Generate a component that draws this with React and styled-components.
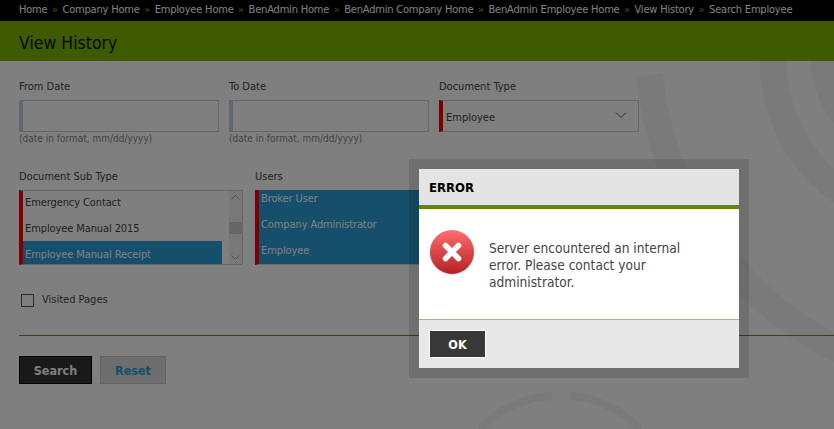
import React from 'react'
import styled, { createGlobalStyle } from 'styled-components'

const crumbs = [
  'Home',
  'Company Home',
  'Employee Home',
  'BenAdmin Home',
  'BenAdmin Company Home',
  'BenAdmin Employee Home',
  'View History',
  'Search Employee',
]

const App = () => {
  return (
    <Page>
      <GlobalStyle />
      <Watermark viewBox="0 0 834 429" aria-hidden="true">
        <path d="M 649.6 75 A 344 344 0 0 0 900 373.5" />
        <circle cx="935" cy="60" r="162" />
        <circle className="solid" cx="911" cy="60" r="100" />
        <path className="thin" d="M 480 429 A 105 105 0 0 1 552 396" />
        <path className="thin" d="M 571 396 A 105 105 0 0 1 640 429" />
      </Watermark>

      <Breadcrumbs>
        {crumbs.map((crumb, i) => (
          <React.Fragment key={crumb}>
            {i > 0 && <Sep>»</Sep>}
            <Crumb>{crumb}</Crumb>
          </React.Fragment>
        ))}
      </Breadcrumbs>
      <TitleBar>View History</TitleBar>

      <Form>
        <Row>
          <Field>
            <Label>From Date</Label>
            <TextBox />
            <Hint>(date in format, mm/dd/yyyy)</Hint>
          </Field>
          <Field>
            <Label>To Date</Label>
            <TextBox />
            <Hint>(date in format, mm/dd/yyyy)</Hint>
          </Field>
          <Field>
            <Label>Document Type</Label>
            <SelectBox>
              Employee
              <svg width="12" height="7" viewBox="0 0 12 7" fill="none" stroke="#555" strokeWidth="1">
                <path d="M1 .5 L6 5.5 L11 .5" />
              </svg>
            </SelectBox>
          </Field>
        </Row>

        <ListRow>
          <ListField>
            <Label>Document Sub Type</Label>
            <ListBox>
              <Options>
                <Option>Emergency Contact</Option>
                <Option>Employee Manual 2015</Option>
                <Option $selected>Employee Manual Receipt</Option>
              </Options>
              <Scrollbar>
                <Arrow viewBox="0 0 9 5"><path d="M.5 4.5 L4.5 .5 L8.5 4.5" /></Arrow>
                <Thumb />
                <Arrow viewBox="0 0 9 5"><path d="M.5 .5 L4.5 4.5 L8.5 .5" /></Arrow>
              </Scrollbar>
            </ListBox>
          </ListField>
          <ListField>
            <Label>Users</Label>
            <UserList>
              <UserOption>Broker User</UserOption>
              <UserOption>Company Administrator</UserOption>
              <UserOption>Employee</UserOption>
            </UserList>
          </ListField>
        </ListRow>

        <CheckRow>
          <CheckBox />
          <CheckLabel>Visited Pages</CheckLabel>
        </CheckRow>
        <Rule />
        <Buttons>
          <SearchButton>Search</SearchButton>
          <ResetButton>Reset</ResetButton>
        </Buttons>
      </Form>

      <Overlay />
      <DialogFrame>
        <DialogTitle>ERROR</DialogTitle>
        <DialogBody>
          <svg width="46" height="46" viewBox="0 0 46 46">
            <defs>
              <linearGradient id="errorFill" x1="0" y1="0" x2="0" y2="1">
                <stop offset="0" stopColor="#ff6e70" />
                <stop offset="1" stopColor="#b52024" />
              </linearGradient>
            </defs>
            <circle cx="23" cy="23.5" r="22.5" fill="#e8e8e8" />
            <circle cx="23" cy="23" r="22" fill="url(#errorFill)" />
            <path d="M16.5 16.5 L29.5 29.5 M29.5 16.5 L16.5 29.5" stroke="#fff" strokeWidth="5.5" strokeLinecap="round" />
          </svg>
          <Message>Server encountered an internal error. Please contact your administrator.</Message>
        </DialogBody>
        <DialogFooter>
          <OkButton>OK</OkButton>
        </DialogFooter>
      </DialogFrame>
    </Page>
  )
}

const GlobalStyle = createGlobalStyle`
  html, body {
    margin: 0;
    padding: 0;
    background: #fff;
  }
  body {
    font-family: "DejaVu Sans Condensed", "Liberation Sans", sans-serif;
    font-size: 11px;
    color: #444;
  }
`

const Page = styled.div`
  position: relative;
  width: 834px;
  height: 429px;
  overflow: hidden;
  background: #fff;
`

const Watermark = styled.svg`
  position: absolute;
  inset: 0;
  width: 834px;
  height: 429px;
  fill: none;
  stroke: #f4f4f4;
  stroke-width: 27px;
  .solid {
    fill: #f4f4f4;
    stroke: none;
  }
  .thin {
    stroke-width: 8px;
  }
`

const Breadcrumbs = styled.div`
  position: relative;
  display: flex;
  align-items: center;
  height: 21px;
  padding: 0 0 3px 19px;
  box-sizing: border-box;
  background: #000;
`

const Crumb = styled.span`
  color: #fff;
  white-space: nowrap;
  letter-spacing: -0.19px;
`

const Sep = styled.span`
  width: 15px;
  text-align: center;
  color: #7eb400;
`

const TitleBar = styled.div`
  position: relative;
  display: flex;
  align-items: center;
  height: 40px;
  padding: 4px 0 0 19px;
  box-sizing: border-box;
  background: #7eb400;
  color: #111;
  font-size: 17.5px;
`

const Form = styled.div`
  position: relative;
  padding: 19px 0 0 19px;
`

const Row = styled.div`
  display: flex;
  gap: 10px;
`

const Field = styled.div`
  width: 200px;
`

const Label = styled.div`
  height: 20px;
  line-height: 14px;
  color: #444;
`

const TextBox = styled.div`
  box-sizing: border-box;
  height: 32px;
  border: 1px solid #bed0d8;
  border-left: 4px solid #bed0d8;
  background: transparent;
`

const Hint = styled.div`
  line-height: 14px;
  font-size: 10px;
  color: #888;
`

const SelectBox = styled.div`
  box-sizing: border-box;
  display: flex;
  align-items: center;
  justify-content: space-between;
  height: 32px;
  padding: 2px 11px 0 3px;
  border: 1px solid #bed0d8;
  border-left: 4px solid #ff0000;
  svg {
    margin-top: -3px;
  }
`

const ListRow = styled.div`
  display: flex;
  gap: 12px;
  padding-top: 24px;
`

const ListField = styled.div`
  width: 224px;
`

const ListBox = styled.div`
  box-sizing: border-box;
  display: flex;
  height: 75px;
  border: 1px solid #bed0d8;
  border-left: 4px solid #ff0000;
  overflow: hidden;
`

const Options = styled.div`
  flex: 1;
  margin-top: -2px;
`

const Option = styled.div`
  display: flex;
  align-items: center;
  width: 199px;
  height: 26px;
  padding-left: 2px;
  box-sizing: border-box;
  letter-spacing: -0.1px;
  background: ${(p) => (p.$selected ? '#2a9fd8' : 'transparent')};
  color: ${(p) => (p.$selected ? '#fff' : '#444')};
`

const Scrollbar = styled.div`
  display: flex;
  flex-direction: column;
  align-items: center;
  justify-content: space-between;
  width: 13px;
  padding: 4px 0;
  box-sizing: border-box;
  background: #f0f0f0;
`

const Thumb = styled.div`
  width: 13px;
  height: 12px;
  background: #cdcdcd;
`

const Arrow = styled.svg`
  width: 9px;
  height: 5px;
  fill: none;
  stroke: #aaa;
`

const UserList = styled.div`
  box-sizing: border-box;
  height: 75px;
  border-left: 4px solid #ff0000;
  border-bottom: 1px solid #d8d8d8;
  background: #2a9fd8;
  background-clip: padding-box;
`

const UserOption = styled.div`
  display: flex;
  align-items: center;
  height: 26px;
  padding-left: 2px;
  letter-spacing: -0.1px;
  color: #fff;
  position: relative;
  top: -5px;
`

const CheckRow = styled.div`
  display: flex;
  align-items: flex-start;
  gap: 8px;
  padding: 29px 0 0 2px;
`

const CheckBox = styled.div`
  box-sizing: border-box;
  width: 13px;
  height: 13px;
  border: 1px solid #555;
  background: #fff;
`

const CheckLabel = styled.span`
  line-height: 12px;
`

const Rule = styled.div`
  margin-top: 28px;
  height: 1px;
  background: #6a8f10;
`

const Buttons = styled.div`
  display: flex;
  gap: 8px;
  margin-top: 20px;
`

const SearchButton = styled.button`
  box-sizing: border-box;
  width: 73px;
  height: 28px;
  border: 1px solid #000;
  background: #333;
  color: #fff;
  font: bold 12.5px "DejaVu Sans Condensed", "Liberation Sans", sans-serif;
`

const ResetButton = styled.button`
  box-sizing: border-box;
  width: 66px;
  height: 28px;
  border: 1px solid #c8c8c8;
  background: #dcdcdc;
  color: #2a9fd8;
  font: bold 12.5px "DejaVu Sans Condensed", "Liberation Sans", sans-serif;
`

const Overlay = styled.div`
  position: absolute;
  inset: 0;
  background: rgba(0, 0, 0, 0.5);
`

const DialogFrame = styled.div`
  position: absolute;
  left: 409px;
  top: 159px;
  box-sizing: content-box;
  width: 320px;
  height: 199px;
  display: flex;
  flex-direction: column;
  border: 10px solid rgba(0, 0, 0, 0.12);
  background-clip: padding-box;
`

const DialogTitle = styled.div`
  display: flex;
  align-items: center;
  height: 36px;
  padding-left: 10px;
  background: #e4e4e4;
  border-bottom: 4px solid #5f8700;
  color: #000;
  font-weight: bold;
  font-size: 13px;
`

const DialogBody = styled.div`
  display: flex;
  height: 110px;
  padding: 20px 0 0 10px;
  box-sizing: border-box;
  gap: 14px;
  background: #fff;
  svg {
    flex: none;
  }
`

const Message = styled.p`
  width: 200px;
  margin: 11px 0 0;
  font-size: 13.6px;
  line-height: 17px;
  color: #444;
`

const DialogFooter = styled.div`
  flex: 1;
  padding: 10px 0 0 10px;
  background: #e8e8e8;
  border-top: 1px solid #a0c070;
`

const OkButton = styled.button`
  box-sizing: border-box;
  display: block;
  width: 57px;
  height: 28px;
  border: 1px solid #fff;
  background: #383838;
  color: #fff;
  font: bold 12.5px "DejaVu Sans Condensed", "Liberation Sans", sans-serif;
`

export default App
